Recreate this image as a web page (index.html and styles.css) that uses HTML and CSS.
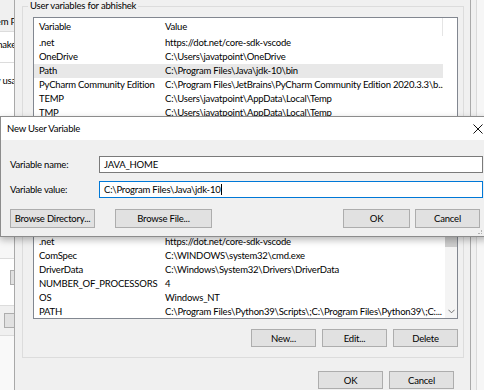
FILE: index.html
```html
<!DOCTYPE html>
<html lang="en">
<head>
  <meta charset="UTF-8">
  <meta name="viewport" content="width=device-width, initial-scale=1.0">
  <title>Environment Variables</title>
  <link rel="stylesheet" href="styles.css">
</head>
<body>
  <div class="screen">
    <!-- janela de tras (System Properties) -->
    <div class="back-window">
      <div class="bw-block bw-tabs"><span>System P</span></div>
      <div class="bw-block bw-note"><span>n to make</span></div>
      <div class="bw-block bw-perf"><span>memory usa</span></div>
      <div class="bw-block bw-gap"></div>
      <div class="bw-block bw-white"><i class="bw-btn bw-btn-small"></i></div>
      <div class="bw-block bw-grey"><i class="bw-btn"></i></div>
      <div class="bw-block bw-rest"></div>
    </div>

    <div class="env-dialog">
      <fieldset class="group">
        <legend>User variables for abhishek</legend>
        <div class="list list-user">
          <div class="list-grid">
            <div class="list-head"><span>Variable</span><span class="head-last">Value</span></div>
            <div class="list-row"><span>.net</span><span>https://dot.net/core-sdk-vscode</span></div>
            <div class="list-row"><span>OneDrive</span><span>C:\Users\javatpoint\OneDrive</span></div>
            <div class="list-row selected"><span>Path</span><span>C:\Program Files\Java\jdk-10\bin</span></div>
            <div class="list-row"><span>PyCharm Community Edition</span><span>C:\Program Files\JetBrains\PyCharm Community Edition 2020.3.3\b...</span></div>
            <div class="list-row"><span>TEMP</span><span>C:\Users\javatpoint\AppData\Local\Temp</span></div>
            <div class="list-row"><span>TMP</span><span>C:\Users\javatpoint\AppData\Local\Temp</span></div>
          </div>
        </div>
        <div class="btn-row">
          <button class="btn">New...</button>
          <button class="btn">Edit...</button>
          <button class="btn">Delete</button>
        </div>
      </fieldset>

      <fieldset class="group group-system">
        <legend>System variables</legend>
        <div class="list list-system">
          <div class="list-grid">
            <div class="list-head"><span>Variable</span><span>Value</span></div>
            <div class="list-row"><span>.net</span><span>https://dot.net/core-sdk-vscode</span></div>
            <div class="list-row"><span>ComSpec</span><span>C:\WINDOWS\system32\cmd.exe</span></div>
            <div class="list-row"><span>DriverData</span><span>C:\Windows\System32\Drivers\DriverData</span></div>
            <div class="list-row"><span>NUMBER_OF_PROCESSORS</span><span>4</span></div>
            <div class="list-row"><span>OS</span><span>Windows_NT</span></div>
            <div class="list-row"><span>PATH</span><span>C:\Program Files\Python39\Scripts\;C:\Program Files\Python39\;C:...</span></div>
          </div>
          <div class="scrollbar">
            <div class="thumb"></div>
            <svg class="chevron" viewBox="0 0 8 5">
              <path d="M0.5 0.5 4 4 7.5 0.5" />
            </svg>
          </div>
        </div>
        <div class="btn-row">
          <button class="btn">New...</button>
          <button class="btn">Edit...</button>
          <button class="btn">Delete</button>
        </div>
      </fieldset>

      <div class="dialog-actions">
        <button class="btn">OK</button>
        <button class="btn">Cancel</button>
      </div>
    </div>

    <div class="side-window"><div class="side-edge"></div></div>

    <!-- dialogo por cima -->
    <div class="modal">
      <div class="modal-title">
        <span>New User Variable</span>
        <svg class="close-icon" viewBox="0 0 10 10">
          <path d="M0.5 0.5 9.5 9.5 M9.5 0.5 0.5 9.5" />
        </svg>
      </div>
      <div class="modal-body">
        <div class="field">
          <label>Variable name:</label>
          <div class="input">JAVA_HOME</div>
        </div>
        <div class="field">
          <label>Variable value:</label>
          <div class="input focused">C:\Program Files\Java\jdk-10<i class="caret"></i></div>
        </div>
        <div class="modal-actions">
          <button class="btn btn-dir">Browse Directory...</button>
          <button class="btn btn-file">Browse File...</button>
          <span class="spacer"></span>
          <button class="btn btn-ok">OK</button>
          <button class="btn btn-cancel">Cancel</button>
        </div>
      </div>
      <i class="grip"></i>
    </div>
  </div>
</body>
</html>
```

FILE: styles.css
```css
body {
  margin: 0;
  padding: 0;
  font-family: 'Lato', 'Noto Sans', sans-serif;
  font-size: 9.5px;
  letter-spacing: -0.2px;
  color: #000;
  background-color: #f0f0f0;
}
.screen {
  position: relative;
  display: flex;
  width: 484px;
  height: 390px;
  overflow: hidden;
}

/* janela de tras */
.back-window {
  width: 14px;
  flex-shrink: 0;
  display: flex;
  flex-direction: column;
  overflow: hidden;
}
.bw-block {
  display: flex;
  justify-content: flex-end;
  white-space: nowrap;
  line-height: 12px;
  flex-shrink: 0;
}
.bw-block span {
  margin-right: -2px;
}
.bw-tabs {
  height: 31px;
  padding-top: 16px;
  box-sizing: border-box;
  background-color: #f0f0f0;
}
.bw-note {
  height: 31px;
  padding-top: 7px;
  box-sizing: border-box;
  border-top: 1px solid #dcdcdc;
  background-color: #fff;
}
.bw-perf {
  height: 175px;
  padding-top: 12px;
  box-sizing: border-box;
  border-top: 1px solid #dcdcdc;
  background-color: #fff;
}
.bw-gap {
  height: 21px;
  background-color: #f7f7f7;
}
.bw-white {
  height: 47px;
  padding-top: 11px;
  box-sizing: border-box;
  border-top: 1px solid #dcdcdc;
  background-color: #fff;
}
.bw-grey {
  height: 30px;
  padding-top: 7px;
  box-sizing: border-box;
  border-top: 1px solid #dcdcdc;
  background-color: #f0f0f0;
}
.bw-rest {
  flex: 1;
  border-top: 1px solid #dcdcdc;
  background-color: #f9f9f9;
}
.bw-btn {
  display: block;
  width: 11px;
  height: 15px;
  margin-right: -1px;
  border: 1px solid #adadad;
  background-color: #e1e1e1;
  box-sizing: border-box;
}
.bw-btn-small {
  width: 5px;
}

/* dialogo Environment Variables */
.env-dialog {
  width: 457px;
  flex-shrink: 0;
  box-sizing: border-box;
  border-left: 1px solid #a9a9a9;
  border-right: 1px solid #a9a9a9;
  padding: 0 6px 0 7px;
  background-color: #f0f0f0;
}
.group {
  margin: 0;
  padding: 5px 5px 10px 10px;
  border: 1px solid #dcdcdc;
}
.group legend {
  margin-left: -5px;
  padding: 0 2px;
  line-height: 12px;
}
.group-system {
  margin-top: 7px;
}
.list {
  display: flex;
  border: 1px solid #828790;
  background-color: #fff;
  overflow: hidden;
}
.list-user {
  height: 134px;
}
.list-system {
  height: 101px;
}
.list-grid {
  width: 409px;
}
.list-system .list-grid {
  width: 411px;
}
.list-head,
.list-row {
  display: grid;
  grid-template-columns: 126px 1fr;
  white-space: nowrap;
}
.list-head {
  height: 18px;
  line-height: 18px;
}
.list-head .head-last {
  border-right: 1px solid #e5e5e5;
}
.list-row {
  height: 14px;
  line-height: 14px;
}
.list-head span,
.list-row span {
  padding-left: 5px;
  overflow: hidden;
}
.list-row.selected {
  background-color: #e8e8e8;
}
.scrollbar {
  width: 12px;
  margin-left: auto;
  display: flex;
  flex-direction: column;
  align-items: center;
  background-color: #f4f4f4;
}
.thumb {
  width: 12px;
  height: 30px;
  background-color: #cdcdcd;
}
.chevron {
  width: 7px;
  height: 5px;
  margin-top: auto;
  margin-bottom: 4px;
  fill: none;
  stroke: #606060;
  stroke-width: 1;
}
.btn-row {
  display: flex;
  justify-content: flex-end;
  gap: 6px;
  margin-top: 10px;
}
.btn {
  width: 65px;
  height: 18px;
  padding: 0;
  border: 1px solid #adadad;
  background-color: #e1e1e1;
  font-family: inherit;
  font-size: inherit;
  letter-spacing: inherit;
  color: #000;
  white-space: nowrap;
  box-sizing: border-box;
}
.dialog-actions {
  display: flex;
  justify-content: flex-end;
  gap: 6px;
  margin-top: 13px;
  margin-right: 10px;
}

/* janela da direita */
.side-window {
  flex: 1;
  padding-left: 5px;
  background-color: #f0f0f0;
}
.side-edge {
  height: 100%;
  border-left: 1px solid #dadada;
  background-color: #f6f6f6;
}

/* dialogo New User Variable */
.modal {
  position: absolute;
  left: 0;
  top: 116px;
  width: 488px;
  height: 121px;
  box-sizing: border-box;
  border: 1px solid #8c8c8c;
  background-color: #f0f0f0;
  box-shadow: 0 3px 7px rgba(0, 0, 0, 0.28);
  z-index: 1;
}
.modal-title {
  display: flex;
  align-items: center;
  justify-content: space-between;
  height: 23px;
  padding: 0 4px 0 6px;
  background-color: #fff;
}
.close-icon {
  width: 10px;
  height: 10px;
  fill: none;
  stroke: #111;
  stroke-width: 1;
}
.modal-body {
  padding: 16px 4px 0 9px;
}
.field {
  display: flex;
  align-items: center;
  margin-bottom: 8px;
}
.field label {
  width: 89px;
  flex-shrink: 0;
}
.input {
  flex: 1;
  height: 17px;
  line-height: 15px;
  padding-left: 4px;
  border: 1px solid #7a7a7a;
  background-color: #fff;
  box-sizing: border-box;
  white-space: nowrap;
}
.input.focused {
  border-color: #0078d7;
}
.caret {
  display: inline-block;
  width: 1px;
  height: 11px;
  vertical-align: -2px;
  background-color: #000;
}
.modal-actions {
  display: flex;
  margin-top: 11px;
  margin-right: 3px;
}
.modal-actions .btn {
  height: 19px;
}
.btn-dir {
  width: 85px;
}
.btn-file {
  width: 97px;
  margin-left: 20px;
}
.spacer {
  flex: 1;
}
.btn-ok {
  width: 67px;
}
.btn-cancel {
  margin-left: 5px;
}
.grip {
  position: absolute;
  right: 5px;
  bottom: 2px;
  width: 3px;
  height: 3px;
  border-right: 1px dotted #b0b0b0;
  border-bottom: 1px dotted #b0b0b0;
}
```
